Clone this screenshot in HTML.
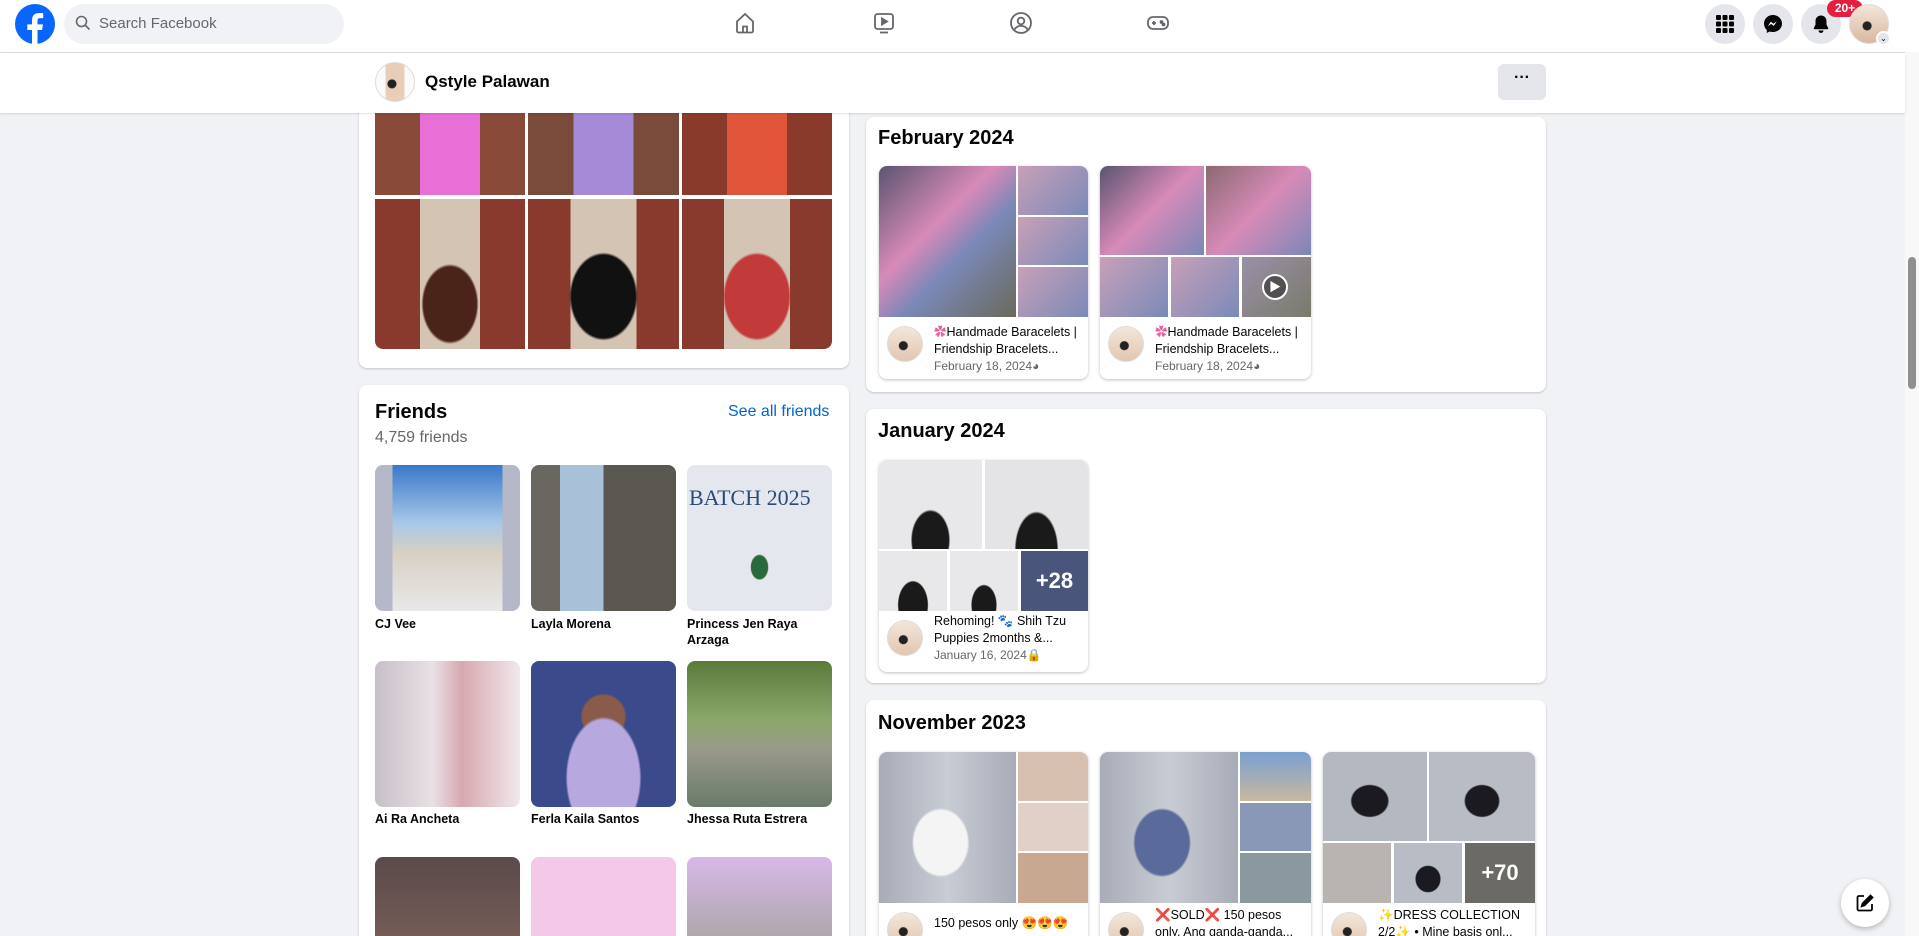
<!DOCTYPE html>
<html style="width:1919px;height:936px;overflow:hidden"><head><meta charset="utf-8"><style>
*{box-sizing:border-box;margin:0;padding:0}
body{width:1919px;height:936px;overflow:hidden;background:#f0f2f5;font-family:"Liberation Sans","Noto Sans CJK JP",sans-serif;color:#050505;position:relative}
#w{position:absolute;left:0;top:0;width:1919px;height:936px;overflow:hidden}
.a{position:absolute}
.card{position:absolute;background:#fff;border-radius:8px;box-shadow:0 1px 2px rgba(0,0,0,.2)}
.t{position:absolute;background:#fff;border-radius:8px;box-shadow:0 1px 3px rgba(0,0,0,.25);overflow:hidden}
.im{position:absolute}
.h{font-weight:bold;font-size:20px}
.cap{position:absolute;left:55px;font-size:12.5px;line-height:17px;color:#050505;width:150px}
.date{color:#65676b;font-size:12px}
.av{position:absolute;left:8px;width:36px;height:36px;border-radius:50%;border:1px solid #ddd;background:radial-gradient(circle at 45% 55%,#222 0 4px,transparent 5px),linear-gradient(#f3e6da,#e2c6b0)}
.circ{position:absolute;top:4px;width:40px;height:40px;border-radius:50%;background:#e4e6eb}
.fr{position:absolute;width:145px;height:146px;border-radius:8px}
.fn{position:absolute;font-size:12.5px;font-weight:600;width:145px;line-height:16px}
.more{position:absolute;color:#fff;font-size:22px;font-weight:bold;display:flex;align-items:center;justify-content:center;background:rgba(0,0,0,.3)}
</style></head><body><div id="w">

<!-- top bar -->
<div class="a" style="left:0;top:0;width:1919px;height:52px;background:#fff;box-shadow:0 1px 2px rgba(0,0,0,.15)"></div>
<svg class="a" style="left:15px;top:4px" width="40" height="40" viewBox="0 0 40 40"><circle cx="20" cy="20" r="20" fill="#0866ff"/><path d="M22.5 40V26h4.6l.8-5.6h-5.4v-3.6c0-1.6.5-2.7 2.8-2.7h2.9V9.2c-.5-.1-2.2-.2-4.2-.2-4.2 0-7 2.5-7 7.1v4.3h-4.7V26H17v14z" fill="#fff"/></svg>
<div class="a" style="left:64px;top:4px;width:280px;height:40px;border-radius:20px;background:#f0f2f5"></div>
<svg class="a" style="left:75px;top:15px" width="16" height="16" viewBox="0 0 16 16"><circle cx="6.5" cy="6.5" r="5" fill="none" stroke="#65676b" stroke-width="1.6"/><path d="M10 10l4.5 4.5" stroke="#65676b" stroke-width="1.6"/></svg>
<div class="a" style="left:99px;top:15px;font-size:15px;color:#65676b">Search Facebook</div>

<svg class="a" style="left:733px;top:11px" width="24" height="24" viewBox="0 0 24 24" fill="none" stroke="#65676b" stroke-width="1.8"><path d="M4 10.5L12 3l8 7.5V20a1.5 1.5 0 0 1-1.5 1.5h-13A1.5 1.5 0 0 1 4 20z"/><path d="M10 21.5v-6h4v6"/></svg>
<svg class="a" style="left:872px;top:11px" width="24" height="24" viewBox="0 0 24 24" fill="none" stroke="#65676b" stroke-width="1.8"><rect x="3" y="3" width="18" height="15" rx="2.5"/><path d="M10 7.5v6l5-3z" fill="#65676b"/><path d="M8 21.5h8"/></svg>
<svg class="a" style="left:1009px;top:11px" width="24" height="24" viewBox="0 0 24 24" fill="none" stroke="#65676b" stroke-width="1.8"><circle cx="12" cy="12" r="10"/><circle cx="12" cy="10" r="3.3"/><path d="M5.5 18.5c1.5-2.5 3.8-3.6 6.5-3.6s5 1.1 6.5 3.6"/></svg>
<svg class="a" style="left:1146px;top:11px" width="24" height="24" viewBox="0 0 24 24" fill="none" stroke="#65676b" stroke-width="1.8"><rect x="2" y="6" width="20" height="12" rx="5"/><path d="M6 12h4M8 10v4"/><circle cx="15.5" cy="11" r="1" fill="#65676b"/><circle cx="17.5" cy="13.5" r="1" fill="#65676b"/></svg>

<div class="circ" style="left:1705px"></div>
<svg class="a" style="left:1715px;top:14px" width="20" height="20" viewBox="0 0 20 20" fill="#050505"><rect x="1" y="1" width="5" height="5" rx="1"/><rect x="7.5" y="1" width="5" height="5" rx="1"/><rect x="14" y="1" width="5" height="5" rx="1"/><rect x="1" y="7.5" width="5" height="5" rx="1"/><rect x="7.5" y="7.5" width="5" height="5" rx="1"/><rect x="14" y="7.5" width="5" height="5" rx="1"/><rect x="1" y="14" width="5" height="5" rx="1"/><rect x="7.5" y="14" width="5" height="5" rx="1"/><rect x="14" y="14" width="5" height="5" rx="1"/></svg>
<div class="circ" style="left:1753px"></div>
<svg class="a" style="left:1763px;top:14px" width="20" height="20" viewBox="0 0 20 20"><path d="M10 1C5 1 1 4.7 1 9.6c0 2.6 1.1 4.8 2.8 6.4V19l2.8-1.5c1 .3 2.2.5 3.4.5 5 0 9-3.7 9-8.4S15 1 10 1z" fill="#050505"/><path d="M4.8 12.3l3-4.6 2.6 2 3.4-2.4-3 4.6-2.6-2z" fill="#fff"/></svg>
<div class="circ" style="left:1801px"></div>
<svg class="a" style="left:1811px;top:14px" width="20" height="20" viewBox="0 0 20 20" fill="#050505"><path d="M10 1.5c-3.3 0-5.5 2.5-5.5 5.6v3.5L2.8 14c-.3.6.1 1.2.8 1.2h12.8c.7 0 1.1-.6.8-1.2l-1.7-3.4V7.1c0-3.1-2.2-5.6-5.5-5.6z"/><path d="M7.5 16.5a2.5 2.5 0 0 0 5 0z"/></svg>
<div class="a" style="left:1827px;top:0;width:36px;height:17px;border-radius:9px;background:#e41e3f;color:#fff;font-size:12px;font-weight:bold;text-align:center;line-height:17px">20+</div>
<div class="a" style="left:1849px;top:4px;width:40px;height:40px;border-radius:50%;background:radial-gradient(circle at 45% 55%,#222 0 4px,transparent 5px),linear-gradient(#f3e6da,#d9b89e);border:1px solid #ddd"></div>
<div class="a" style="left:1876px;top:31px;width:15px;height:15px;border-radius:50%;background:#e4e6eb;border:2px solid #fff;font-size:8px;text-align:center;line-height:11px">⌄</div>

<!-- scrollbar -->
<div class="a" style="left:1905px;top:52px;width:14px;height:884px;background:#f8f8f8"></div>
<div class="a" style="left:1908px;top:257px;width:8px;height:132px;border-radius:4px;background:#909090"></div>

<!-- profile bar -->
<div class="a" style="left:0;top:53px;width:1905px;height:60px;background:#fff;box-shadow:0 1px 2px rgba(0,0,0,.12);z-index:2"></div>
<div class="a" style="left:375px;top:62px;width:40px;height:40px;border-radius:50%;z-index:3;background:radial-gradient(circle at 42% 55%,#222 0 4px,transparent 5px),linear-gradient(90deg,#fafafa 25%,#e8cdb8 25% 75%,#fafafa 75%);border:1px solid #ddd"></div>
<div class="a" style="left:425px;top:72px;font-size:17px;font-weight:600;z-index:3">Qstyle Palawan</div>
<div class="a" style="left:1498px;top:64px;width:48px;height:36px;border-radius:6px;background:#e4e6eb;text-align:center;font-weight:bold;font-size:16px;line-height:28px;z-index:3">···</div>

<!-- left photos card -->
<div class="card" style="left:359px;top:90px;width:490px;height:278px;border-radius:0 0 8px 8px"></div>
<div class="a" style="left:375px;top:113px;width:457px;height:236px;border-radius:0 0 8px 8px;overflow:hidden">
 <div class="im" style="left:0;top:0;width:150px;height:82px;background:linear-gradient(90deg,#8a4a3a 30%,#e86fd6 30% 70%,#8a4a3a 70%)"></div>
 <div class="im" style="left:153px;top:0;width:151px;height:82px;background:linear-gradient(90deg,#7a4a3a 30%,#a58ad8 30% 70%,#7a4a3a 70%)"></div>
 <div class="im" style="left:307px;top:0;width:150px;height:82px;background:linear-gradient(90deg,#8a3a2a 30%,#e0553a 30% 70%,#8a3a2a 70%)"></div>
 <div class="im" style="left:0;top:86px;width:150px;height:150px;background:radial-gradient(ellipse at 50% 70%,#4a2418 0 25%,transparent 27%),linear-gradient(90deg,#8a3a2c 30%,#d4c4b4 30% 70%,#8a3a2c 70%)"></div>
 <div class="im" style="left:153px;top:86px;width:151px;height:150px;background:radial-gradient(ellipse at 50% 65%,#111 0 30%,transparent 32%),linear-gradient(90deg,#8a3a2c 28%,#d4c4b4 28% 72%,#8a3a2c 72%)"></div>
 <div class="im" style="left:307px;top:86px;width:150px;height:150px;background:radial-gradient(ellipse at 50% 65%,#c23a3a 0 30%,transparent 32%),linear-gradient(90deg,#8a3a2c 28%,#d4c4b4 28% 72%,#8a3a2c 72%)"></div>
</div>

<!-- friends card -->
<div class="card" style="left:359px;top:385px;width:490px;height:600px"></div>
<div class="a h" style="left:375px;top:401px">Friends</div>
<div class="a" style="left:728px;top:403px;font-size:16px;color:#0064d1">See all friends</div>
<div class="a" style="left:375px;top:429px;font-size:16px;color:#65676b">4,759 friends</div>
<div class="fr" style="left:375px;top:465px;background:linear-gradient(90deg,#b4b8c8 12%,transparent 12% 88%,#b4b8c8 88%),linear-gradient(#3a78c8 0,#a8c8e8 40%,#d8d0c4 60%,#e8e8e8 100%)"></div>
<div class="fr" style="left:531px;top:465px;background:linear-gradient(90deg,#6a6660 20%,#a8c0d8 20% 50%,#5a5650 50%),#666"></div>
<div class="fr" style="left:687px;top:465px;background:radial-gradient(ellipse at 50% 70%,#2a6a3a 0 8%,transparent 9%),#e4e8ee"><div class="a" style="left:2px;top:20px;font-size:22px;color:#2a4a7a;font-family:'Liberation Serif',serif;white-space:nowrap">BATCH 2025</div></div>
<div class="fn" style="left:375px;top:616px">CJ Vee</div>
<div class="fn" style="left:531px;top:616px">Layla Morena</div>
<div class="fn" style="left:687px;top:616px">Princess Jen Raya Arzaga</div>
<div class="fr" style="left:375px;top:661px;background:linear-gradient(90deg,#c8c0c8,#e8e0e4 40%,#d8a8b0 60%,#f0e8ec)"></div>
<div class="fr" style="left:531px;top:661px;background:radial-gradient(ellipse at 50% 80%,#b8a8e0 0 35%,transparent 37%),radial-gradient(circle at 50% 38%,#8a5a4a 0 18%,transparent 20%),#3a4a8a"></div>
<div class="fr" style="left:687px;top:661px;background:linear-gradient(#5a7a3a,#8aa86a 40%,#9a9a8a 60%,#6a7a6a)"></div>
<div class="fn" style="left:375px;top:811px">Ai Ra Ancheta</div>
<div class="fn" style="left:531px;top:811px">Ferla Kaila Santos</div>
<div class="fn" style="left:687px;top:811px">Jhessa Ruta Estrera</div>
<div class="fr" style="left:375px;top:857px;background:linear-gradient(#5a4a4a,#8a6a60)"></div>
<div class="fr" style="left:531px;top:857px;background:#f4c8e8"></div>
<div class="fr" style="left:687px;top:857px;background:linear-gradient(#d8b8e8,#8a9a7a)"></div>

<!-- Feb 2024 -->
<div class="card" style="left:866px;top:117px;width:680px;height:275px"></div>
<div class="a h" style="left:878px;top:127px">February 2024</div>
<div class="t" style="left:879px;top:166px;width:209px;height:213px">
 <div class="im" style="left:0;top:0;width:137px;height:151px;background:linear-gradient(135deg,#5a5470 0,#d88ab8 40%,#7a88b8 60%,#6a6a5a)"></div>
 <div class="im" style="left:139px;top:0;width:70px;height:49px;background:linear-gradient(135deg,#c8a0b8,#7a8ab8)"></div>
 <div class="im" style="left:139px;top:51px;width:70px;height:48px;background:linear-gradient(135deg,#c8a0b8,#7a8ab8)"></div>
 <div class="im" style="left:139px;top:101px;width:70px;height:50px;background:linear-gradient(135deg,#c8a0b8,#7a8ab8)"></div>
 <div class="av" style="top:160px"></div>
 <div class="cap" style="top:158px"><span style="color:#e860a0">✿</span>Handmade Baracelets | Friendship Bracelets...<br><span class="date">February 18, 2024◕</span></div>
</div>
<div class="t" style="left:1100px;top:166px;width:211px;height:213px">
 <div class="im" style="left:0;top:0;width:104px;height:89px;background:linear-gradient(135deg,#5a5470,#d88ab8 50%,#7a88b8)"></div>
 <div class="im" style="left:106px;top:0;width:105px;height:89px;background:linear-gradient(135deg,#8a6a70,#d88ab8 50%,#7a88b8)"></div>
 <div class="im" style="left:0;top:91px;width:68px;height:60px;background:linear-gradient(135deg,#c8a0b8,#7a8ab8)"></div>
 <div class="im" style="left:71px;top:91px;width:68px;height:60px;background:linear-gradient(135deg,#c8a0b8,#7a8ab8)"></div>
 <div class="im" style="left:142px;top:91px;width:69px;height:60px;background:linear-gradient(135deg,#9a90a8,#7a7a6a)"></div>
 <div class="a" style="left:162px;top:108px;width:26px;height:26px;border-radius:50%;border:2px solid #fff;background:rgba(0,0,0,.4);color:#fff;font-size:12px;text-align:center;line-height:22px">▶</div>
 <div class="av" style="top:160px"></div>
 <div class="cap" style="top:158px"><span style="color:#e860a0">✿</span>Handmade Baracelets | Friendship Bracelets...<br><span class="date">February 18, 2024◕</span></div>
</div>

<!-- Jan 2024 -->
<div class="card" style="left:866px;top:409px;width:680px;height:274px"></div>
<div class="a h" style="left:878px;top:420px">January 2024</div>
<div class="t" style="left:879px;top:460px;width:209px;height:212px">
 <div class="im" style="left:0;top:0;width:103px;height:89px;background:radial-gradient(ellipse at 50% 90%,#1a1a1a 0 25%,transparent 27%),#e8e8ea"></div>
 <div class="im" style="left:106px;top:0;width:103px;height:89px;background:radial-gradient(ellipse at 50% 100%,#1a1a1a 0 28%,transparent 30%),#e4e4e6"></div>
 <div class="im" style="left:0;top:91px;width:68px;height:60px;background:radial-gradient(ellipse at 50% 90%,#1a1a1a 0 30%,transparent 32%),#e8e8ea"></div>
 <div class="im" style="left:71px;top:91px;width:68px;height:60px;background:radial-gradient(ellipse at 50% 90%,#1a1a1a 0 25%,transparent 27%),#e8e8ea"></div>
 <div class="im" style="left:142px;top:91px;width:67px;height:60px;background:#6a7ab0"></div>
 <div class="more" style="left:142px;top:91px;width:67px;height:60px">+28</div>
 <div class="av" style="top:160px"></div>
 <div class="cap" style="top:153px">Rehoming! 🐾 Shih Tzu Puppies 2months &amp;...<br><span class="date">January 16, 2024🔒</span></div>
</div>

<!-- Nov 2023 -->
<div class="card" style="left:866px;top:700px;width:680px;height:300px"></div>
<div class="a h" style="left:878px;top:712px">November 2023</div>
<div class="t" style="left:879px;top:752px;width:209px;height:220px">
 <div class="im" style="left:0;top:0;width:137px;height:151px;background:radial-gradient(ellipse at 45% 60%,#f4f4f4 0 25%,transparent 27%),linear-gradient(90deg,#a8acb8,#c8ccd4,#a8acb8)"></div>
 <div class="im" style="left:139px;top:0;width:70px;height:49px;background:#d8c0b0"></div>
 <div class="im" style="left:139px;top:51px;width:70px;height:48px;background:#e0d0c8"></div>
 <div class="im" style="left:139px;top:101px;width:70px;height:50px;background:#c8a890"></div>
 <div class="av" style="top:160px"></div>
 <div class="cap" style="top:163px">150 pesos only 😍😍😍</div>
</div>
<div class="t" style="left:1100px;top:752px;width:211px;height:220px">
 <div class="im" style="left:0;top:0;width:138px;height:151px;background:radial-gradient(ellipse at 45% 60%,#5a6a9a 0 25%,transparent 27%),linear-gradient(90deg,#a8acb8,#c8ccd4,#a8acb8)"></div>
 <div class="im" style="left:140px;top:0;width:71px;height:49px;background:linear-gradient(#7aa0d0,#c8b8a0)"></div>
 <div class="im" style="left:140px;top:51px;width:71px;height:48px;background:#8a98b8"></div>
 <div class="im" style="left:140px;top:101px;width:71px;height:50px;background:#8a98a0"></div>
 <div class="av" style="top:160px"></div>
 <div class="cap" style="top:155px"><span style="color:#e0244a">❌</span>SOLD<span style="color:#e0244a">❌</span> 150 pesos only. Ang ganda-ganda...</div>
</div>
<div class="t" style="left:1323px;top:752px;width:212px;height:220px">
 <div class="im" style="left:0;top:0;width:104px;height:89px;background:radial-gradient(ellipse at 45% 55%,#1a1a20 0 22%,transparent 24%),#b4b8c0"></div>
 <div class="im" style="left:106px;top:0;width:106px;height:89px;background:radial-gradient(ellipse at 50% 55%,#1a1a20 0 22%,transparent 24%),#b8bcc4"></div>
 <div class="im" style="left:0;top:91px;width:68px;height:60px;background:#b8b4b0"></div>
 <div class="im" style="left:71px;top:91px;width:68px;height:60px;background:radial-gradient(ellipse at 50% 60%,#1a1a20 0 25%,transparent 27%),#b8bcc4"></div>
 <div class="im" style="left:142px;top:91px;width:70px;height:60px;background:#9a9890"></div>
 <div class="more" style="left:142px;top:91px;width:70px;height:60px">+70</div>
 <div class="av" style="top:160px"></div>
 <div class="cap" style="top:155px">✨DRESS COLLECTION 2/2✨ • Mine basis onl...</div>
</div>

<!-- floating edit -->
<div class="a" style="left:1841px;top:879px;width:48px;height:48px;border-radius:50%;background:#fff;box-shadow:0 2px 6px rgba(0,0,0,.25)"></div>
<svg class="a" style="left:1855px;top:893px" width="20" height="20" viewBox="0 0 20 20" fill="none" stroke="#050505" stroke-width="1.8"><path d="M9 3H4a1.5 1.5 0 0 0-1.5 1.5v11.5A1.5 1.5 0 0 0 4 17.5h11.5A1.5 1.5 0 0 0 17 16v-5"/><path d="M15.5 2.5l2 2-8 8-2.8.8.8-2.8z" fill="#050505"/></svg>
</div></body></html>
